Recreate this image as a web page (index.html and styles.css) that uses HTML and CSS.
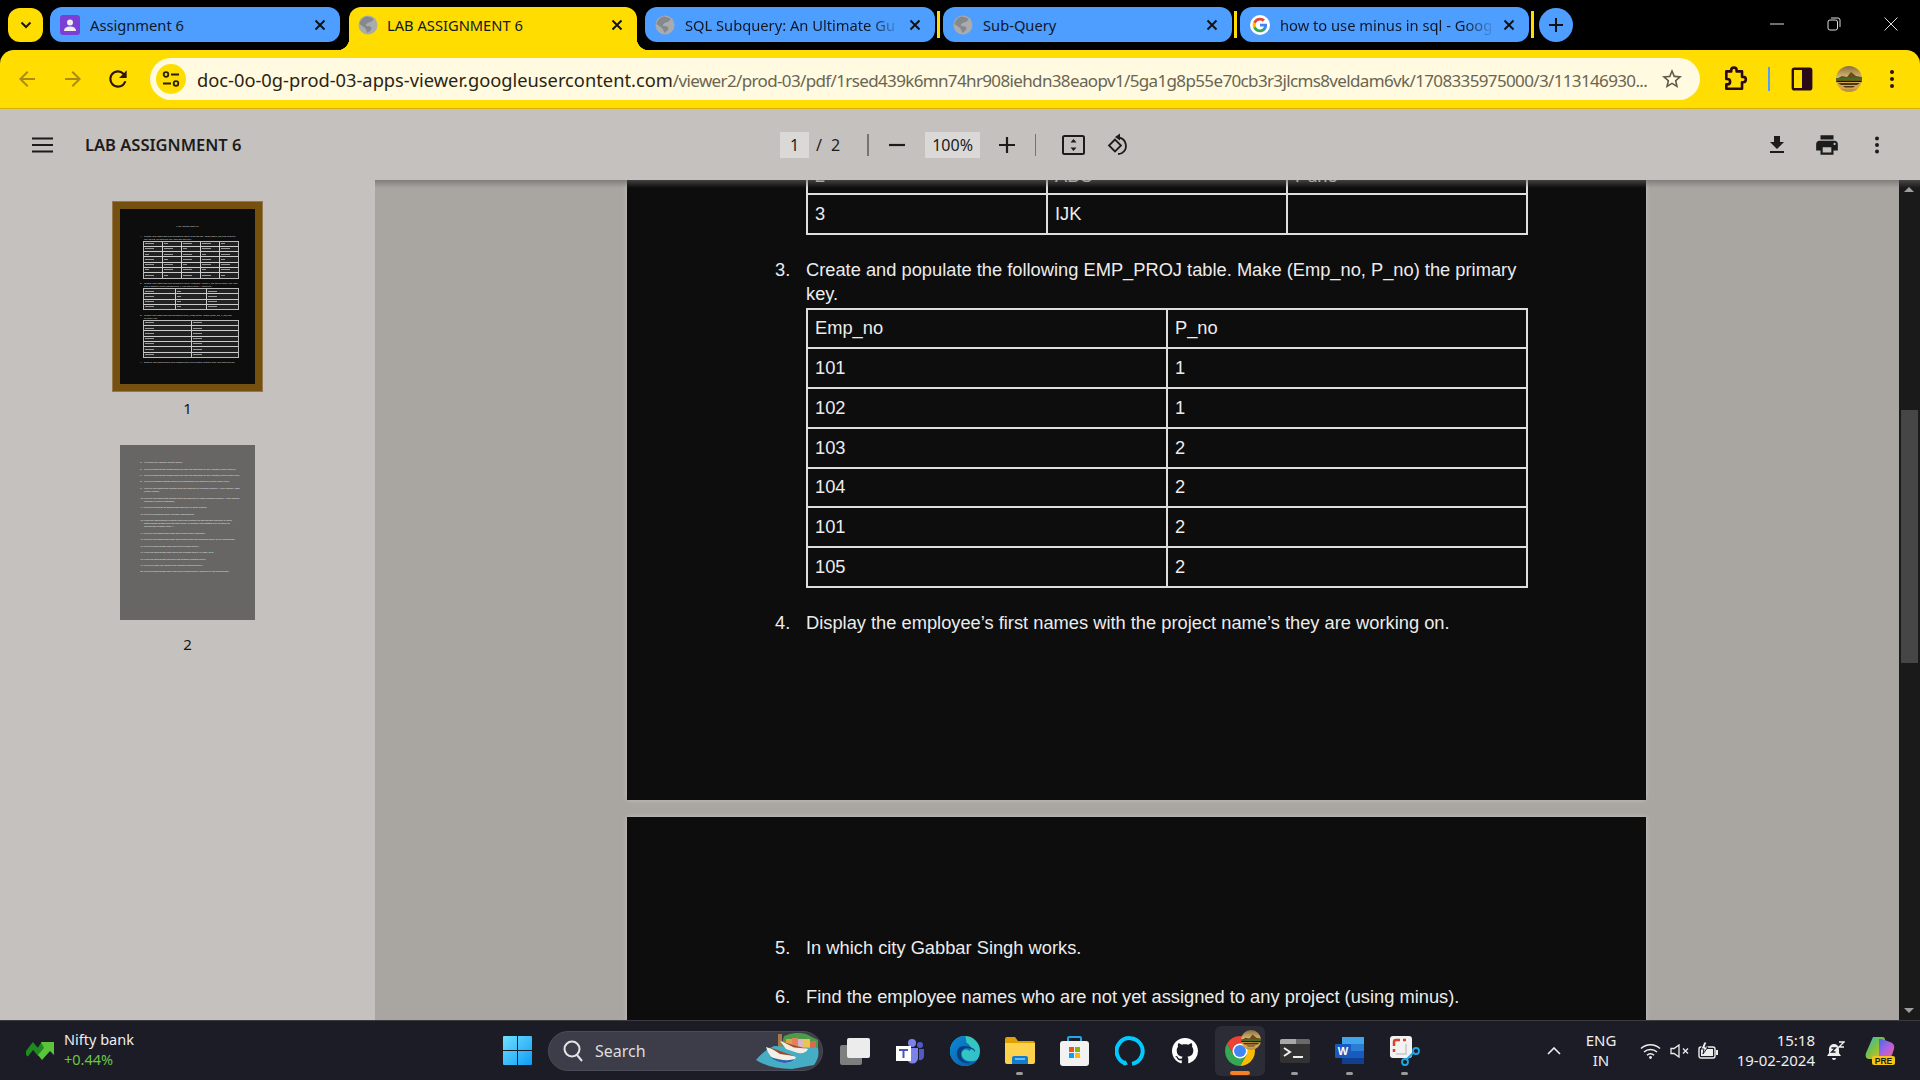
FILE: index.html
```html
<!DOCTYPE html>
<html lang="en">
<head>
  <meta charset="UTF-8" />
  <meta name="viewport" content="width=device-width, initial-scale=1.0" />
  <title>LAB ASSIGNMENT 6</title>
  <link rel="stylesheet" href="styles.css">
</head>
<body>
  <svg class="defs" width="0" height="0">
    <defs>
      <clipPath id="avatar-clip"><circle cx="13" cy="13" r="13" /></clipPath>
      <linearGradient id="sky" x1="0" y1="0" x2="0" y2="1"><stop offset="0" stop-color="#8a6f3e" /><stop offset="1" stop-color="#e3c27a" /></linearGradient>
    </defs>
    <symbol id="globe" viewBox="0 0 20 20">
      <circle cx="10" cy="10" r="9.500" fill="#a9abad" />
      <path d="M9 1.500c3 .5 5 1 6.500 2.500-.5 2-2.500 3-4.500 3.500-2 .5-3.500 2-3 3.500 2 0 4.500 0 5.500 2 0 2-2 3.500-4 5-1-2-1.500-4-3-5.500C4.500 11 2.500 10 1.500 9 2.500 5 5 2 9 1.500z" fill="#85898e" />
    </symbol>
    <symbol id="close" viewBox="0 0 12 12">
      <path d="M1.500 1.500l9 9M10.500 1.500l-9 9" fill="none" stroke="currentColor" stroke-width="1.900" />
    </symbol>
    <symbol id="avatar" viewBox="0 0 26 26">
      <g clip-path="url(#avatar-clip)">
        <rect width="26" height="13" fill="url(#sky)" />
        <path d="M0 13l6-3 5 1 4-5 5 4 6 1v3z" fill="#6a4c1c" />
        <rect y="12" width="26" height="2.500" fill="#4a6a28" />
        <rect y="14.500" width="26" height="1.500" fill="#1c1608" />
        <rect y="16" width="26" height="10" fill="#d8a648" />
        <path d="M2 17h22l-3 2H5zM7 20h12l-2 1.500H9z" fill="#4a3612" />
        <rect y="23" width="26" height="3" fill="#b8954e" />
      </g>
    </symbol>
  </svg>

  <!-- tab strip -->
  <div class="tabstrip">
    <div class="tab-search">
      <svg width="12" height="8" viewBox="0 0 12 8"><path d="M1.500 1.500L6 6l4.500-4.500" fill="none" stroke="#1a1a1a" stroke-width="2" /></svg>
    </div>
    <div class="tab tab-first">
      <svg class="favicon" viewBox="0 0 20 20"><rect width="20" height="20" rx="3" fill="#7b3fd6" /><circle cx="10" cy="7.500" r="3" fill="#eee" /><path d="M4 16c0-3 2-4.500 6-4.500s6 1.500 6 4.500z" fill="#eee" /></svg>
      <span class="tab-title">Assignment 6</span>
      <svg class="tab-close"><use href="#close" /></svg>
    </div>
    <div class="tab tab-active">
      <svg class="favicon"><use href="#globe" /></svg>
      <span class="tab-title">LAB ASSIGNMENT 6</span>
      <svg class="tab-close"><use href="#close" /></svg>
    </div>
    <div class="tab">
      <svg class="favicon"><use href="#globe" /></svg>
      <span class="tab-title tab-fade">SQL Subquery: An Ultimate Gu</span>
      <svg class="tab-close"><use href="#close" /></svg>
    </div>
    <div class="tab-sep"></div>
    <div class="tab tab-narrow">
      <svg class="favicon"><use href="#globe" /></svg>
      <span class="tab-title">Sub-Query</span>
      <svg class="tab-close"><use href="#close" /></svg>
    </div>
    <div class="tab-sep"></div>
    <div class="tab tab-narrow">
      <svg class="favicon" viewBox="0 0 24 24">
        <circle cx="12" cy="12" r="12" fill="#fff" />
        <g transform="translate(2.400 2.400) scale(.8)">
          <path fill="#4285F4" d="M22.560 12.250c0-.78-.07-1.530-.2-2.250H12v4.260h5.920c-.26 1.370-1.040 2.530-2.210 3.310v2.770h3.570c2.080-1.920 3.280-4.740 3.280-8.090z" />
          <path fill="#34A853" d="M12 23c2.970 0 5.460-.98 7.280-2.660l-3.570-2.770c-.98.66-2.230 1.060-3.710 1.060-2.860 0-5.290-1.930-6.160-4.530H2.180v2.840C3.990 20.530 7.700 23 12 23z" />
          <path fill="#FBBC05" d="M5.840 14.090c-.22-.66-.35-1.360-.35-2.090s.13-1.430.35-2.090V7.070H2.180C1.430 8.550 1 10.220 1 12s.43 3.450 1.180 4.930l3.660-2.840z" />
          <path fill="#EA4335" d="M12 5.380c1.620 0 3.060.56 4.210 1.640l3.150-3.150C17.450 2.090 14.970 1 12 1 7.700 1 3.990 3.470 2.180 7.070l3.660 2.840c.87-2.600 3.300-4.530 6.160-4.530z" />
        </g>
      </svg>
      <span class="tab-title tab-fade">how to use minus in sql - Goog</span>
      <svg class="tab-close"><use href="#close" /></svg>
    </div>
    <div class="tab-sep"></div>
    <div class="tab-new">
      <svg width="14" height="14" viewBox="0 0 14 14"><path d="M7 0v14M0 7h14" stroke="#111" stroke-width="2" /></svg>
    </div>
    <div class="win-controls">
      <svg width="14" height="14" viewBox="0 0 14 14"><path d="M0 7h14" stroke="#ddd" stroke-width="1" /></svg>
      <svg width="14" height="14" viewBox="0 0 14 14"><rect x="1" y="3" width="9.500" height="10" rx="2" fill="none" stroke="#ddd" /><path d="M4 1h7a2 2 0 0 1 2 2v7" fill="none" stroke="#ddd" /></svg>
      <svg width="14" height="14" viewBox="0 0 14 14"><path d="M.5.5l13 13M13.500.5l-13 13" stroke="#ddd" stroke-width="1" /></svg>
    </div>
  </div>

  <!-- address bar -->
  <div class="toolbar">
    <svg class="tool-icon nav-back" viewBox="0 0 24 24"><path d="M20 11H7.830l5.590-5.590L12 4l-8 8 8 8 1.410-1.410L7.830 13H20v-2z" fill="#ad8a12" /></svg>
    <svg class="tool-icon nav-forward" viewBox="0 0 24 24"><path d="M4 11h12.170l-5.590-5.590L12 4l8 8-8 8-1.410-1.410L16.170 13H4v-2z" fill="#ad8a12" /></svg>
    <svg class="tool-icon nav-reload" viewBox="0 0 24 24"><path d="M17.650 6.350A7.958 7.958 0 0 0 12 4c-4.420 0-7.990 3.580-7.990 8s3.570 8 7.990 8c3.730 0 6.840-2.550 7.730-6h-2.080A5.990 5.990 0 0 1 12 18c-3.310 0-6-2.690-6-6s2.690-6 6-6c1.660 0 3.140.69 4.220 1.780L13 11h7V4l-2.350 2.350z" fill="#2a1500" /></svg>
    <div class="omnibox">
      <div class="site-chip">
        <svg width="18" height="18" viewBox="0 0 18 18"><circle cx="4" cy="4.500" r="2.300" fill="none" stroke="#2a2000" stroke-width="1.800" /><path d="M9 4.500h8M1 13.500h8" stroke="#2a2000" stroke-width="1.800" /><circle cx="14" cy="13.500" r="2.300" fill="none" stroke="#2a2000" stroke-width="1.800" /></svg>
      </div>
      <span class="url"><span class="url-host">doc-0o-0g-prod-03-apps-viewer.googleusercontent.com</span><span class="url-path">/viewer2/prod-03/pdf/1rsed439k6mn74hr908iehdn38eaopv1/5ga1g8p55e70cb3r3jlcms8veldam6vk/1708335975000/3/113146930...</span></span>
      <svg class="star" viewBox="0 0 24 24"><path d="M22 9.240l-7.190-.62L12 2 9.190 8.630 2 9.240l5.460 4.730L5.820 21 12 17.270 18.180 21l-1.630-7.030L22 9.240zM12 15.400l-3.760 2.270 1-4.280-3.320-2.880 4.380-.38L12 6.100l1.710 4.040 4.380.38-3.320 2.880 1 4.280L12 15.400z" fill="#5f5a4a" /></svg>
    </div>
    <svg class="tool-icon tool-ext" viewBox="0 0 24 24"><path d="M8.500 5V4a2.500 2.500 0 0 1 5 0v1h5v5h1a2.500 2.500 0 0 1 0 5h-1v6H4v-4h1a2.500 2.500 0 0 0 0-5H4V5z" fill="none" stroke="#2a0a1a" stroke-width="2.400" stroke-linejoin="round" /></svg>
    <div class="tool-sep"></div>
    <svg class="tool-icon tool-panel" viewBox="0 0 20 24"><rect x="1.500" y="2.500" width="17" height="19" rx="1.500" fill="none" stroke="#2a0a1a" stroke-width="2.200" /><rect x="10" y="3" width="8" height="18" fill="#2a0a1a" /></svg>
    <svg class="avatar-big"><use href="#avatar" /></svg>
    <svg class="tool-icon tool-more" viewBox="0 0 24 24"><circle cx="12" cy="5" r="2" fill="#2a1500" /><circle cx="12" cy="12" r="2" fill="#2a1500" /><circle cx="12" cy="19" r="2" fill="#2a1500" /></svg>
  </div>

  <!-- pdf viewer toolbar -->
  <div class="pdfbar">
    <svg class="menu-icon" width="21" height="16" viewBox="0 0 21 16"><path d="M0 1.500h21M0 8h21M0 14.500h21" stroke="#1c1c1c" stroke-width="2.200" /></svg>
    <span class="doc-title">LAB ASSIGNMENT 6</span>
    <span class="page-box">1</span>
    <span class="page-of">/</span>
    <span class="page-total">2</span>
    <div class="pdf-sep sep-a"></div>
    <svg class="zoom-minus" width="16" height="16" viewBox="0 0 16 16"><path d="M0 8h16" stroke="#1c1c1c" stroke-width="2.200" /></svg>
    <span class="zoom-box">100%</span>
    <svg class="zoom-plus" width="16" height="16" viewBox="0 0 16 16"><path d="M0 8h16M8 0v16" stroke="#1c1c1c" stroke-width="2.200" /></svg>
    <div class="pdf-sep sep-b"></div>
    <svg class="fit-icon" width="23" height="20" viewBox="0 0 23 20"><rect x="1" y="1" width="21" height="18" rx="1.500" fill="none" stroke="#1c1c1c" stroke-width="2" /><path d="M11.500 4l3 3.500h-6zM11.500 16l3-3.500h-6z" fill="#1c1c1c" /></svg>
    <svg class="rotate-icon" width="23" height="24" viewBox="0 0 23 24"><path d="M8 6.500l-6 6 6 6 6-6z" fill="none" stroke="#1c1c1c" stroke-width="1.800" /><path d="M12 4.500a8.500 8.500 0 0 1 3 15.500c-1.500.8-3 1-4 1" fill="none" stroke="#1c1c1c" stroke-width="1.800" /><path d="M13 .5v7l-5-3.500z" fill="#1c1c1c" /></svg>
    <div class="pdf-right">
      <svg width="24" height="24" viewBox="0 0 24 24"><path d="M19 9h-4V3H9v6H5l7 7 7-7zM5 18v2h14v-2H5z" fill="#1c1c1c" /></svg>
      <svg width="26" height="26" viewBox="0 0 24 24"><path d="M19 8H5c-1.660 0-3 1.340-3 3v6h4v4h12v-4h4v-6c0-1.660-1.340-3-3-3zm-3 11H8v-5h8v5zm3-7c-.55 0-1-.45-1-1s.45-1 1-1 1 .45 1 1-.45 1-1 1zm-1-9H6v4h12V3z" fill="#1c1c1c" /></svg>
      <svg width="24" height="24" viewBox="0 0 24 24"><circle cx="12" cy="5.500" r="2" fill="#1c1c1c" /><circle cx="12" cy="12" r="2" fill="#1c1c1c" /><circle cx="12" cy="18.500" r="2" fill="#1c1c1c" /></svg>
    </div>
  </div>

  <div class="viewer">
    <aside class="sidebar">
      <div class="thumb-frame">
        <div class="thumb thumb-dark">
          <div class="t-title">LAB ASSIGNMENT 6</div>
          <div class="t-line t-wrap t-first"><i>1.</i><span>Create and populate the following table: EMPLOYEE. Make (Emp_no) the primary key and D_no foreign key and set not null.</span></div>
          <div class="t-grid t-grid-a" id="grid-a"></div>
          <div class="t-line t-wrap"><i>2.</i><span>Create and populate the following table: PROJECT. Make P_no the primary key and put a default value (constraint) P_Loc with value 1 'Mumbai'.</span></div>
          <div class="t-grid t-grid-b" id="grid-b"></div>
          <div class="t-line t-wrap"><i>3.</i><span>Create and populate the following EMP_PROJ table. Make (Emp_no, P_no) the primary key.</span></div>
          <div class="t-grid t-grid-c" id="grid-c"></div>
          <div class="t-line t-last"><i>4.</i><span>Display the employee's first names with the project name's they are working on.</span></div>
        </div>
      </div>
      <div class="thumb-num">1</div>
      <div class="thumb thumb-grey" id="thumb-two"></div>
      <div class="thumb-num">2</div>
    </aside>

    <main class="pages">
      <section class="page page-one">
        <table class="doc-table tbl-three">
          <tr class="row-cut"><td>2</td><td>ABC</td><td>Pune</td></tr>
          <tr><td>3</td><td>IJK</td><td></td></tr>
        </table>
        <div class="item item-three">
          <span class="num">3.</span>
          <span>Create and populate the following EMP_PROJ table. Make (Emp_no, P_no) the primary key.</span>
        </div>
        <table class="doc-table tbl-two">
          <tr><td>Emp_no</td><td>P_no</td></tr>
          <tr><td>101</td><td>1</td></tr>
          <tr><td>102</td><td>1</td></tr>
          <tr><td>103</td><td>2</td></tr>
          <tr><td>104</td><td>2</td></tr>
          <tr><td>101</td><td>2</td></tr>
          <tr><td>105</td><td>2</td></tr>
        </table>
        <div class="item item-four">
          <span class="num">4.</span>
          <span>Display the employee’s first names with the project name’s they are working on.</span>
        </div>
      </section>
      <section class="page page-two">
        <div class="item item-five">
          <span class="num">5.</span>
          <span>In which city Gabbar Singh works.</span>
        </div>
        <div class="item item-six">
          <span class="num">6.</span>
          <span>Find the employee names who are not yet assigned to any project (using minus).</span>
        </div>
      </section>
    </main>

    <div class="scrollbar">
      <div class="sb-arrow sb-up"></div>
      <div class="sb-thumb"></div>
      <div class="sb-arrow sb-down"></div>
    </div>
  </div>

  <!-- windows taskbar -->
  <footer class="taskbar">
    <div class="widget">
      <svg width="28" height="18" viewBox="0 0 28 18"><path d="M0 13l7-9 5 6 4-6 4 4" fill="none" stroke="#1f8a1f" stroke-width="5" /><path d="M15 0h13v13l-4-4-8 9-4-5 6-7z" fill="#5cc43a" /></svg>
      <div class="widget-text">
        <div>Nifty bank</div>
        <div class="widget-green">+0.44%</div>
      </div>
    </div>

    <svg class="win-logo" width="29" height="29" viewBox="0 0 29 29">
      <defs><linearGradient id="wg" x1="0" y1="0" x2="1" y2="1"><stop offset="0" stop-color="#6fe0ff" /><stop offset="1" stop-color="#0f9cf5" /></linearGradient></defs>
      <path d="M0 1a1 1 0 0 1 1-1h13v14H0zM15 0h13a1 1 0 0 1 1 1v13H15zM0 15h14v14H1a1 1 0 0 1-1-1zM15 15h14v13a1 1 0 0 1-1 1H15z" fill="url(#wg)" />
    </svg>

    <div class="searchbox">
      <svg width="20" height="22" viewBox="0 0 20 22"><circle cx="9" cy="9" r="7.500" fill="none" stroke="#e4e4e4" stroke-width="2" /><path d="M14 15l5 6" stroke="#e4e4e4" stroke-width="2" /></svg>
      <span>Search</span>
      <svg class="search-art" width="64" height="36" viewBox="0 0 64 36">
        <path d="M28 3Q40-2 50 1l12 6v10H24z" fill="#4f9a48" />
        <rect x="22" y="1" width="4" height="13" fill="#a9784a" />
        <rect x="30" y="6" width="6" height="10" fill="#dba642" /><rect x="36" y="5" width="6" height="11" fill="#e5805e" /><rect x="42" y="6" width="6" height="10" fill="#d9b6c0" /><rect x="48" y="6" width="6" height="10" fill="#e8c650" /><rect x="54" y="8" width="6" height="8" fill="#d9694f" />
        <path d="M0 27Q8 17 18 13l44 2q2 9-4 17L36 36Q14 36 0 27z" fill="#46aec4" />
        <path d="M24 8l28 8q-2 5-10 4L30 16z" fill="#f3ece2" /><path d="M26 8.500l24 7-12-1z" fill="#a84a30" />
        <path d="M10 14l30 10q-2 6-12 6-14-2-18-16z" fill="#f5efe6" /><path d="M13 14l25 9-14-2z" fill="#9a4c2c" /><path d="M14 24q6 5 14 6 8 0 11-4-10 3-25-2z" fill="#2a66b0" />
      </svg>
    </div>

    <div class="task-apps">
      <div class="app">
        <svg width="30" height="30" viewBox="0 0 30 30"><rect y="9" width="22" height="20" rx="2" fill="#7e7e7e" /><rect x="7" y="2" width="23" height="20" rx="2" fill="#ececec" /></svg>
      </div>
      <div class="app">
        <svg width="28" height="26" viewBox="0 0 28 26"><circle cx="16" cy="5" r="4" fill="#7b83eb" /><circle cx="24" cy="7" r="3" fill="#5059c9" /><path d="M11 10h11v10a5.500 5.500 0 0 1-11 0z" fill="#7b83eb" /><path d="M23 11h5v7a4 4 0 0 1-5 4z" fill="#5059c9" /><rect y="8" width="15" height="15" fill="#fff" /><path d="M3 11h9v2H8.500v7h-2v-7H3z" fill="#4b53bc" /></svg>
      </div>
      <div class="app">
        <svg width="30" height="30" viewBox="0 0 30 30">
          <defs>
            <linearGradient id="eg" x1="0" y1="0" x2="1" y2="1"><stop offset="0" stop-color="#38d0a8" /><stop offset="1" stop-color="#2fbcd8" /></linearGradient>
            <linearGradient id="eb" x1="0" y1="0" x2="1" y2="1"><stop offset="0" stop-color="#0a8ad8" /><stop offset="1" stop-color="#0b5aa8" /></linearGradient>
          </defs>
          <circle cx="15" cy="15" r="15" fill="url(#eg)" />
          <path d="M15 0C6 0 0 7 0 15c0 9 7 15 15 15 5 0 9-2 12-6-4 2-11 2-14-2-2-3-2-6 1-8 2-1 4 0 6 1 2-3 0-6-3-8-1 0-1-7-2-7z" fill="url(#eb)" />
          <path d="M14 10c-5 0-8 4-7 9 1 6 7 9 13 8-4-1-9-3-9-9 0-4 3-6 6-6 3 0 6 1 8 4 1-3-5-6-11-6z" fill="#0b3f7a" />
        </svg>
      </div>
      <div class="app app-open">
        <svg width="30" height="27" viewBox="0 0 30 27"><path d="M0 2a2 2 0 0 1 2-2h8l3 4h15a2 2 0 0 1 2 2v4H0z" fill="#e0a000" /><path d="M0 6h30v19a2 2 0 0 1-2 2H2a2 2 0 0 1-2-2z" fill="#ffd24d" /><path d="M7 27v-6a2 2 0 0 1 2-2h12a2 2 0 0 1 2 2v6z" fill="#0f7dd0" /><path d="M10 22h10" stroke="#8fd0ff" stroke-width="1.500" /></svg>
      </div>
      <div class="app">
        <svg width="29" height="30" viewBox="0 0 29 30"><path d="M8 6V2a1 1 0 0 1 1-1h11a1 1 0 0 1 1 1v4" fill="none" stroke="#1fa8e8" stroke-width="2" /><rect y="5" width="29" height="25" rx="3" fill="#f2f2f2" /><rect x="9" y="11" width="5" height="5" fill="#f25022" /><rect x="15" y="11" width="5" height="5" fill="#7fba00" /><rect x="9" y="17" width="5" height="5" fill="#00a4ef" /><rect x="15" y="17" width="5" height="5" fill="#ffb900" /></svg>
      </div>
      <div class="app">
        <svg width="30" height="30" viewBox="0 0 30 30"><path d="M11 27.600A13 13 0 1 1 17 27.900" fill="none" stroke="#00caff" stroke-width="4" /><path d="M10 24l3 4.500-5 1z" fill="#00caff" /></svg>
      </div>
      <div class="app">
        <svg width="26" height="26" viewBox="0 0 16 16"><path d="M8 0C3.580 0 0 3.580 0 8c0 3.540 2.290 6.530 5.470 7.590.4.07.55-.17.55-.38 0-.19-.01-.82-.01-1.490-2.010.37-2.530-.49-2.690-.94-.09-.23-.48-.94-.82-1.130-.28-.15-.68-.52-.01-.53.63-.01 1.080.58 1.230.82.72 1.210 1.870.87 2.330.66.07-.52.28-.87.51-1.070-1.780-.2-3.640-.89-3.640-3.950 0-.87.31-1.590.82-2.150-.08-.2-.36-1.020.08-2.120 0 0 .67-.21 2.200.82.64-.18 1.320-.27 2-.27.68 0 1.360.09 2 .27 1.530-1.040 2.200-.82 2.200-.82.44 1.100.16 1.920.08 2.120.51.56.82 1.270.82 2.150 0 3.070-1.870 3.750-3.650 3.950.29.25.54.73.54 1.480 0 1.070-.01 1.930-.01 2.200 0 .21.15.46.55.38A8.013 8.013 0 0 0 16 8c0-4.420-3.580-8-8-8z" fill="#fff" /></svg>
      </div>
      <div class="app app-chrome">
        <svg width="30" height="30" viewBox="0 0 30 30">
          <path d="M2.010 7.500A15 15 0 0 1 27.990 7.500H15L8.500 18.750z" fill="#ea4335" />
          <path d="M2.010 7.500A15 15 0 0 1 27.990 7.500H15L8.500 18.750z" fill="#fbbc05" transform="rotate(120 15 15)" />
          <path d="M2.010 7.500A15 15 0 0 1 27.990 7.500H15L8.500 18.750z" fill="#34a853" transform="rotate(240 15 15)" />
          <circle cx="15" cy="15" r="7.500" fill="#fff" />
          <circle cx="15" cy="15" r="6" fill="#4285f4" />
        </svg>
        <svg class="avatar-badge"><use href="#avatar" /></svg>
      </div>
      <div class="app app-open">
        <svg width="30" height="24" viewBox="0 0 30 24"><rect width="30" height="24" rx="2" fill="#323232" /><path d="M0 2a2 2 0 0 1 2-2h14v5H0z" fill="#a8a8a8" /><path d="M16 0h12a2 2 0 0 1 2 2v3H16z" fill="#6a6a6a" /><path d="M4 9l6 4-6 4" fill="none" stroke="#eee" stroke-width="2" /><path d="M13 18h10" stroke="#eee" stroke-width="2" /></svg>
      </div>
      <div class="app app-open">
        <svg width="29" height="27" viewBox="0 0 29 27"><path d="M7 0h20a2 2 0 0 1 2 2v23a2 2 0 0 1-2 2H7z" fill="#2b7cd3" /><path d="M7 0h22v7H7z" fill="#41a5ee" /><path d="M7 14h22v7H7z" fill="#185abd" /><path d="M7 21h22v4a2 2 0 0 1-2 2H7z" fill="#103f91" /><rect y="7" width="16" height="14" rx="1" fill="#185abd" /><text x="8" y="18" text-anchor="middle" class="word-w">W</text></svg>
      </div>
      <div class="app app-open">
        <svg width="30" height="30" viewBox="0 0 30 30"><rect width="22" height="22" rx="3" fill="#f2f2f2" /><path d="M4 10V6a2 2 0 0 1 2-2h4M13 4h3M4 13v3" fill="none" stroke="#e0402a" stroke-width="2.500" /><path d="M6 18h10V8" fill="none" stroke="#c8c8c8" stroke-width="1.500" /><circle cx="15" cy="26" r="3" fill="none" stroke="#1fa8e8" stroke-width="1.800" /><circle cx="26" cy="15" r="3" fill="none" stroke="#1fa8e8" stroke-width="1.800" /><path d="M16 24l7-7" stroke="#1fa8e8" stroke-width="1.800" /></svg>
      </div>
    </div>

    <div class="tray">
      <svg class="tray-chevron" width="14" height="8" viewBox="0 0 14 8"><path d="M1 7l6-6 6 6" fill="none" stroke="#eee" stroke-width="1.600" /></svg>
      <div class="tray-lang"><div>ENG</div><div>IN</div></div>
      <svg class="tray-wifi" width="21" height="16" viewBox="0 0 21 16"><path d="M1 5.500a14 14 0 0 1 19 0M4 9a9.500 9.500 0 0 1 13 0M7 12.300a5 5 0 0 1 7 0" fill="none" stroke="#eee" stroke-width="1.500" /><circle cx="10.500" cy="14.500" r="1.400" fill="#eee" /></svg>
      <svg class="tray-sound" width="20" height="14" viewBox="0 0 20 14"><path d="M1 4.500h3L9 1v12L4 9.500H1z" fill="none" stroke="#eee" stroke-width="1.300" /><path d="M13 4.500l5 5M18 4.500l-5 5" stroke="#eee" stroke-width="1.300" /></svg>
      <svg class="tray-battery" width="21" height="18" viewBox="0 0 21 18"><rect x="1" y="5" width="16" height="11" rx="2" fill="none" stroke="#eee" stroke-width="1.400" /><rect x="3" y="7" width="12" height="7" fill="#eee" /><rect x="18" y="8" width="2" height="5" fill="#eee" /><path d="M6 0L3 7h3l-1 5 5-7H7l2-5z" fill="#eee" stroke="#1c1c26" /></svg>
      <div class="tray-clock"><div>15:18</div><div>19-02-2024</div></div>
      <svg class="tray-bell" width="18" height="20" viewBox="0 0 18 20"><path d="M7 3a5 5 0 0 1 5 5v4l2 3H0l2-3V8a5 5 0 0 1 5-5z" fill="#eee" /><path d="M5 17h4a2 2 0 0 1-4 0z" fill="#eee" /><path d="M4.500 7h4l-4 4h4" fill="none" stroke="#1c1c26" stroke-width="1.300" /><path d="M12 1h5l-5 5h5" fill="none" stroke="#eee" stroke-width="1.400" /></svg>
      <svg class="tray-copilot" width="30" height="30" viewBox="0 0 30 30">
        <defs><linearGradient id="cp" x1="0" y1="0" x2="1" y2="1"><stop offset="0" stop-color="#2bb8e8" /><stop offset=".45" stop-color="#7ac143" /><stop offset="1" stop-color="#f0c020" /></linearGradient><linearGradient id="cq" x1="0" y1="0" x2="1" y2="1"><stop offset="0" stop-color="#3a6fe8" /><stop offset=".5" stop-color="#b060e0" /><stop offset="1" stop-color="#f06090" /></linearGradient></defs>
        <path d="M8 1h9c2 0 3 1 3 3l-5 15c-1 3-2 4-4 4H4c-3 0-4-3-3-6z" fill="url(#cp)" />
        <path d="M14 3h3l8 3c3 1 5 3 4 7l-2 6c-1 2-3 3-5 3h-8z" fill="url(#cq)" />
        <rect x="7" y="20" width="23" height="9" rx="2" fill="#f5c518" />
        <text x="18.500" y="27.500" text-anchor="middle" class="pre-text">PRE</text>
      </svg>
    </div>
  </footer>

  <script src="thumbs.js"></script>
</body>
</html>
```

FILE: thumbs.js
```js
// sidebar thumbnails, tiny copies of the pdf pages
const pageTwo = [
  ['5.', 'In which city Gabbar Singh works.', 0],
  ['6.', 'Find the employee names who are not yet assigned to any project (using minus).', 4],
  ['7.', 'Find the employee names who are not yet assigned to any project (using outer join).', 3],
  ['8.', 'Find the project names where no employees are working (using outer join).', 3],
  ['9.', 'Find all the employee names who are working in project number 1 and project 1002 (using union).', 4],
  ['10.', 'Find all the employee names who are working in both project number 1 and project number 2 (using intersect).', 4],
  ['11.', 'Find the number of employees working in each project.', 3],
  ['12.', 'Find the average salary of each department.', 4],
  ['13.', 'Find the department number with the number of employees working in each department where the average salary is greater than 30000 and number of employees greater than 1.', 3],
  ['14.', 'Find all the employees who earn more than Maneesh.', 4],
  ['15.', 'Find all the employees who earn more than the average salary of all employees.', 3],
  ['16.', 'Find the employees who earn the highest salary.', 4],
  ['17.', 'Find the employees who earn the highest salary in dept_no 3.', 3],
  ['18.', 'Find the employees earning the second highest salary.', 4],
  ['19.', 'Find the dept_no having the highest average salary.', 3],
  ['20.', 'Find the employees with the third highest salary among all the employees.', 3]
];

const two = document.getElementById('thumb-two');
pageTwo.forEach(([num, text, gap]) => {
  const div = document.createElement('div');
  div.className = 't-line';
  div.style.marginTop = gap + 'px';
  div.innerHTML = `<i>${num}</i><span>${text}</span>`;
  two.appendChild(div);
});

function fillGrid(id, cols, rows) {
  const grid = document.getElementById(id);
  for (let i = 0; i < cols * rows; i++) {
    const cell = document.createElement('div');
    cell.className = 't-cell';
    const bar = document.createElement('b');
    bar.style.width = (i % 3 === 1 && cols > 2 ? 4 : 9) + 'px';
    cell.appendChild(bar);
    grid.appendChild(cell);
  }
}

fillGrid('grid-a', 5, 7);
fillGrid('grid-b', 3, 4);
fillGrid('grid-c', 2, 7);
```

FILE: styles.css
```css
* { box-sizing: border-box; }
html, body { margin: 0; height: 100%; }
body { width: 1920px; height: 1080px; overflow: hidden; display: flex; flex-direction: column; background: #000; font-family: "Noto Sans", "Open Sans", sans-serif; color: #111; }
svg { display: block; flex: none; }
.defs { position: absolute; }

/* tabs */
.tabstrip { height: 50px; flex: none; display: flex; align-items: flex-start; padding: 8px 0 0 8px; background: #000; }
.tab-search { width: 35px; height: 34px; margin-right: 7px; background: #ffdd00; border-radius: 12px; display: flex; align-items: center; justify-content: center; }
.tab { position: relative; flex: 0 0 290px; width: 290px; height: 35px; margin-top: -1px; padding: 0 14px 0 10px; background: #4d9eff; border-radius: 12px; display: flex; align-items: center; }
.tab-first { margin-right: 9px; }
.tab-narrow { flex-basis: 289px; width: 289px; }
.favicon { width: 20px; height: 20px; margin-right: 10px; }
.tab-title { flex: 1; min-width: 0; overflow: hidden; white-space: nowrap; font-size: 14.700px; color: #101828; }
.tab-fade { -webkit-mask-image: linear-gradient(to right, #000 86%, transparent 100%); mask-image: linear-gradient(to right, #000 86%, transparent 100%); }
.tab-close { width: 12px; height: 12px; margin-left: 8px; color: #111; }
.tab-active { flex-basis: 288px; width: 288px; height: 43px; padding-bottom: 8px; padding-left: 9px; margin-right: 8px; background: #ffdd00; border-radius: 12px 12px 0 0; }
.tab-active .favicon { margin-right: 9px; }
.tab-active::before, .tab-active::after { content: ""; position: absolute; bottom: 0; width: 12px; height: 12px; }
.tab-active::before { left: -12px; background: radial-gradient(circle at 0 0, transparent 12px, #ffdd00 12.500px); }
.tab-active::after { right: -12px; background: radial-gradient(circle at 100% 0, transparent 12px, #ffdd00 12.500px); }
.tab-sep { width: 3px; height: 27px; margin: 3px 3px 0 2px; background: #ffdd00; flex: none; }
.tab-new { width: 34px; height: 34px; margin-left: 2px; border-radius: 50%; background: #4d9eff; display: flex; align-items: center; justify-content: center; }
.win-controls { margin-left: auto; width: 347px; padding: 9px 22px 0 197px; display: flex; justify-content: space-between; }

/* address bar */
.toolbar { height: 59px; flex: none; display: flex; align-items: center; background: #ffdd00; border-bottom: 1px solid #d4b400; border-radius: 14px 14px 0 0; }
.tool-icon { width: 24px; height: 24px; }
.nav-back { margin-left: 15px; }
.nav-forward { margin-left: 22px; }
.nav-reload { margin-left: 20px; width: 26px; height: 26px; }
.omnibox { width: 1550px; height: 42px; margin-left: 19px; padding-left: 6px; display: flex; align-items: center; background: #fffae0; border-radius: 21px; }
.site-chip { width: 30px; height: 30px; flex: none; border-radius: 50%; background: #ffdd00; display: flex; align-items: center; justify-content: center; }
.url { flex: 1; min-width: 0; margin-left: 11px; white-space: nowrap; overflow: hidden; font-size: 18.300px; color: #6a6552; }
.url-host { color: #2a2410; }
.url-path { font-size: 17px; letter-spacing: -.64px; }
.star { width: 24px; height: 24px; margin: 0 16px 0 8px; }
.tool-ext { margin-left: 22px; width: 26px; height: 26px; }
.tool-sep { width: 2px; height: 24px; margin-left: 20px; background: #4d9eff; }
.tool-panel { margin-left: 21px; height: 26px; width: 22px; }
.avatar-big { width: 26px; height: 26px; margin-left: 23px; }
.tool-more { margin-left: 18px; }

/* pdf toolbar */
.pdfbar { height: 71px; flex: none; display: flex; align-items: center; background: #c5c1be; color: #1c1c1c; position: relative; z-index: 2; }
.menu-icon { margin-left: 32px; }
.doc-title { margin-left: 32px; width: 695px; font-size: 16.500px; font-weight: 600; white-space: nowrap; }
.page-box, .zoom-box { height: 26px; background: #dbd9d7; display: flex; align-items: center; justify-content: center; font-size: 16px; }
.page-box { width: 29px; }
.zoom-box { width: 55px; margin-left: 20px; }
.page-of { margin-left: 7px; font-size: 16px; }
.page-total { margin-left: 9px; font-size: 16px; }
.pdf-sep { width: 1px; height: 22px; background: #77736f; }
.sep-a { margin-left: 27px; width: 2px; }
.zoom-minus { margin-left: 20px; }
.zoom-plus { margin-left: 19px; }
.sep-b { margin-left: 20px; }
.fit-icon { margin-left: 26px; }
.rotate-icon { margin-left: 22px; }
.pdf-right { margin-left: auto; width: 124px; margin-right: 31px; display: flex; align-items: center; justify-content: space-between; }

/* viewer */
.viewer { position: relative; flex: 1; min-height: 0; display: flex; background: #a9a5a1; overflow: hidden; }
.viewer::before { content: ""; position: absolute; top: 0; left: 375px; right: 0; height: 8px; z-index: 2; background: linear-gradient(rgba(100,100,100,.6), transparent); }
.sidebar { width: 375px; flex: none; padding-top: 21px; background: #c5c1be; display: flex; flex-direction: column; align-items: center; }
.thumb-frame { border: 8px solid #75500f; outline: 1px solid #96794a; outline-offset: -1px; margin-bottom: -8px; }
.thumb { width: 135px; height: 175px; overflow: hidden; padding: 0 0 0 20px; font-size: 2.450px; line-height: 3px; }
.thumb-dark { background: #0d0d0d; color: #d4d4d4; }
.thumb-grey { padding-top: 15.500px; background: #676664; color: #e2e2e2; }
.thumb-num { height: 17px; margin: 16px 0 28px; font-size: 15px; line-height: 17px; color: #151515; }
.t-title { padding: 15.500px 20px 0 0; text-align: center; }
.t-line { display: flex; width: 100px; }
.t-line i { width: 4px; flex: none; font-style: normal; }
.t-wrap { height: 6px; overflow: hidden; margin-top: 3.500px; }
.t-first { margin-top: 7px; }
.t-last { margin-top: 3.500px; }
.t-grid { display: grid; width: 96px; margin-left: 3px; border: 1px solid #bbb; background: #ccc; gap: 1px; }
.t-grid-a { grid-template-columns: repeat(5, 1fr); }
.t-grid-b { grid-template-columns: repeat(3, 1fr); }
.t-grid-c { grid-template-columns: repeat(2, 1fr); }
.t-cell { height: 4.300px; background: #222; padding: 1.500px 1px 0; }
.t-cell b { display: block; height: 1px; background: #999; }

.pages { flex: 1; min-width: 0; padding-right: 1px; display: flex; flex-direction: column; align-items: center; }
.page { width: 1019px; flex: none; background: #0d0d0d; color: #ececec; padding-left: 148px; box-shadow: 0 0 5px rgba(255,255,255,.35); font-family: "Liberation Sans", Arial, sans-serif; font-size: 18.300px; line-height: 24px; }
.page-one { height: 620px; }
.page-two { height: 300px; margin-top: 17px; padding-top: 119px; }
.doc-table { border-collapse: collapse; table-layout: fixed; width: 722px; margin-left: 31px; }
.doc-table td { height: 39.750px; padding: 0 6px 0 7px; border: 2px solid #dedede; vertical-align: middle; }
.row-cut td { padding-top: 5px; }
.tbl-three { margin-top: -27px; }
.tbl-three td { width: 33.333%; }
.tbl-two { margin-top: 2px; }
.item { display: flex; width: 753px; }
.num { width: 31px; flex: none; }
.item-three { margin-top: 23px; }
.item-four { margin-top: 23px; }
.item-six { margin-top: 25px; }

.scrollbar { width: 21px; flex: none; position: relative; background: #1a1a1a; }
.sb-thumb { position: absolute; top: 230px; left: 2px; width: 17px; height: 253px; background: #464646; }
.sb-arrow { position: absolute; left: 5px; width: 0; height: 0; border-left: 5px solid transparent; border-right: 5px solid transparent; }
.sb-up { top: 7px; border-bottom: 5px solid #9e9e9e; }
.sb-down { bottom: 7px; border-top: 5px solid #9e9e9e; }

/* taskbar */
.taskbar { height: 60px; flex: none; position: relative; display: flex; align-items: center; background: #1c1c26; border-top: 1px solid #3d3b40; color: #eee; font-family: "Noto Sans", "Open Sans", sans-serif; }
.widget { width: 503px; padding-left: 26px; display: flex; align-items: center; gap: 10px; flex: none; }
.widget-text { font-size: 14.500px; line-height: 20px; padding-bottom: 4px; }
.widget-green { color: #6cc644; }
.win-logo { margin-right: 16px; }
.searchbox { position: relative; width: 275px; height: 40px; padding-left: 14px; display: flex; align-items: center; gap: 12px; background: #3d3d4a; border: 1px solid #4c4c58; border-radius: 20px; font-size: 16px; color: #ddd; flex: none; }
.search-art { position: absolute; right: 2px; top: 1px; }
.task-apps { margin-left: 4px; display: flex; flex: none; }
.app { position: relative; width: 55px; height: 50px; display: flex; align-items: center; justify-content: center; flex: none; }
.app-open::after { content: ""; position: absolute; left: 24px; bottom: 1px; width: 7px; height: 3px; border-radius: 2px; background: #9a9a9a; }
.app-chrome { width: 50px; margin: 0 2.500px; background: #2c2c36; border-radius: 6px; }
.app-chrome::after { content: ""; position: absolute; left: 15px; bottom: 1px; width: 20px; height: 4px; border-radius: 2px; background: #f58025; }
.avatar-badge { position: absolute; left: 26px; top: 3px; width: 20px; height: 22px; }
.word-w { font: bold 11px "Liberation Sans", sans-serif; fill: #fff; }
.pre-text { font: bold 8.500px "Liberation Sans", sans-serif; fill: #1a1a1a; }
.tray { margin-left: auto; padding-right: 25px; display: flex; align-items: center; flex: none; font-size: 15px; line-height: 20px; }
.tray-lang { margin-left: 23px; width: 34px; text-align: center; padding-bottom: 2px; }
.tray-wifi { margin-left: 22px; }
.tray-sound { margin-left: 9px; }
.tray-battery { margin-left: 8px; }
.tray-clock { margin-left: 8px; text-align: right; width: 88px; padding-bottom: 2px; }
.tray-bell { margin-left: 12px; }
.tray-copilot { margin-left: 20px; }
```
